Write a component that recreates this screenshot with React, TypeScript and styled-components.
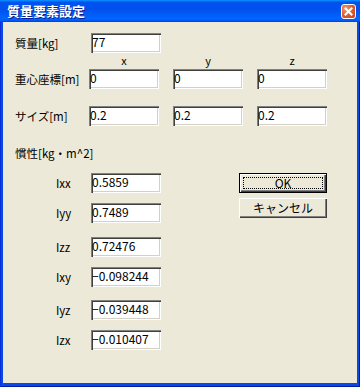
import styled, { createGlobalStyle } from "styled-components";

const GlobalStyle = createGlobalStyle`
  html, body {
    margin: 0;
    padding: 0;
  }
  body {
    width: 360px;
    height: 387px;
    overflow: hidden;
    font-family: "Noto Sans CJK JP", "Liberation Sans", sans-serif;
    font-size: 12px;
    color: #000;
  }
`;

const Window = styled.div`
  width: 360px;
  height: 387px;
  display: flex;
  flex-direction: column;
`;

const TitleBar = styled.div`
  height: 22px;
  flex: none;
  display: flex;
  align-items: center;
  justify-content: space-between;
  padding: 0 4px 0 7px;
  background: linear-gradient(
    to bottom,
    #0997ff 0%,
    #0053ee 10%,
    #0050ee 40%,
    #0066ff 85%,
    #005bff 92%,
    #003dd7 100%
  );
`;

const Title = styled.span`
  color: #fff;
  font-weight: bold;
  font-size: 13px;
  line-height: 16px;
  text-shadow: 1px 1px #0a1c8a;
`;

const CloseButton = styled.div`
  width: 15px;
  height: 15px;
  box-sizing: border-box;
  border: 1px solid #fff;
  border-radius: 3px;
  display: flex;
  align-items: center;
  justify-content: center;
  background: radial-gradient(
    circle at 30% 30%,
    #f29b78 0%,
    #e2602f 45%,
    #c8421a 100%
  );
`;

const Frame = styled.div`
  flex: 1;
  display: flex;
  padding: 0 3px 4px;
  background: #0c48e6;
  box-shadow: inset 1px 0 #0831d9, inset -1px 0 #001ca0, inset 0 -1px #001ca0;
`;

const Client = styled.div`
  flex: 1;
  background: #ece9d8;
  padding: 11px 0 0 12px;
  display: flex;
  flex-direction: column;
`;

const FieldRow = styled.div<{ $top?: number }>`
  display: grid;
  grid-template-columns: 60px repeat(3, 70px);
  column-gap: 14px;
  align-items: center;
  height: 20px;
  margin-top: ${(p) => p.$top ?? 0}px;
`;

const Label = styled.span`
  font-size: 11.5px;
  line-height: 14px;
  white-space: nowrap;
`;

const AxisRow = styled.div`
  display: grid;
  grid-template-columns: 60px repeat(3, 70px);
  column-gap: 14px;
  height: 16px;
  font-size: 11px;
  line-height: 14px;
`;

const Axis = styled.span`
  text-align: center;
`;

const TextBox = styled.input<{ $shift?: number }>`
  width: 70px;
  height: 20px;
  box-sizing: border-box;
  margin: 0 0 0 ${(p) => p.$shift ?? 0}px;
  padding: 0 1px 3px 1px;
  font-family: "Noto Sans CJK JP", "Liberation Sans", sans-serif;
  font-size: 12px;
  color: #000;
  background: #fff;
  border: none;
  outline: none;
  border-radius: 0;
  box-shadow: inset 1px 1px #808080, inset 2px 2px #404040,
    inset -1px -1px #fff, inset -2px -2px #d4d0c8;
`;

const SectionLabel = styled.div`
  margin-top: 20px;
  font-size: 11.5px;
  line-height: 14px;
`;

const Inertia = styled.div`
  display: flex;
  margin-top: 13px;
`;

const InertiaList = styled.div`
  display: flex;
  flex-direction: column;
  padding-left: 41px;
`;

const InertiaRow = styled.div<{ $top: number }>`
  display: grid;
  grid-template-columns: 35px 70px;
  align-items: center;
  height: 20px;
  margin-top: ${(p) => p.$top}px;
`;

const Buttons = styled.div`
  display: flex;
  flex-direction: column;
  gap: 5px;
  margin-left: 78px;
`;

const Button = styled.button<{ $default?: boolean }>`
  position: relative;
  width: 88px;
  height: 20px;
  padding: 0;
  font-family: "Noto Sans CJK JP", "Liberation Sans", sans-serif;
  font-size: 12px;
  line-height: 14px;
  color: #000;
  background: #ece9d8;
  border: ${(p) => (p.$default ? "1px solid #000" : "none")};
  border-radius: 0;
  box-shadow: inset 1px 1px #fff, inset -1px -1px #404040,
    inset -2px -2px #808080;
  &::after {
    content: "";
    display: ${(p) => (p.$default ? "block" : "none")};
    position: absolute;
    inset: 3px;
    border: 1px dotted #000;
  }
`;

const inertia = [
  { name: "Ixx", value: "0.5859", top: 0 },
  { name: "Iyy", value: "0.7489", top: 10 },
  { name: "Izz", value: "0.72476", top: 14 },
  { name: "Ixy", value: "−0.098244", top: 10 },
  { name: "Iyz", value: "−0.039448", top: 13 },
  { name: "Izx", value: "−0.010407", top: 10 },
];

const App = () => {
  return (
    <Window>
      <GlobalStyle />
      <TitleBar>
        <Title>質量要素設定</Title>
        <CloseButton>
          <svg width="9" height="9" viewBox="0 0 9 9">
            <path
              d="M1.5 1.5 L7.5 7.5 M7.5 1.5 L1.5 7.5"
              stroke="#fff"
              strokeWidth="2"
              strokeLinecap="square"
            />
          </svg>
        </CloseButton>
      </TitleBar>
      <Frame>
        <Client>
          <FieldRow>
            <Label>質量[kg]</Label>
            <TextBox defaultValue="77" $shift={2} />
          </FieldRow>
          <AxisRow>
            <span />
            <Axis>x</Axis>
            <Axis>y</Axis>
            <Axis>z</Axis>
          </AxisRow>
          <FieldRow>
            <Label>重心座標[m]</Label>
            <TextBox defaultValue="0" />
            <TextBox defaultValue="0" />
            <TextBox defaultValue="0" />
          </FieldRow>
          <FieldRow $top={17}>
            <Label>サイズ[m]</Label>
            <TextBox defaultValue="0.2" />
            <TextBox defaultValue="0.2" />
            <TextBox defaultValue="0.2" />
          </FieldRow>
          <SectionLabel>慣性[kg・m^2]</SectionLabel>
          <Inertia>
            <InertiaList>
              {inertia.map((item) => (
                <InertiaRow key={item.name} $top={item.top}>
                  <Label>{item.name}</Label>
                  <TextBox defaultValue={item.value} />
                </InertiaRow>
              ))}
            </InertiaList>
            <Buttons>
              <Button $default>OK</Button>
              <Button>キャンセル</Button>
            </Buttons>
          </Inertia>
        </Client>
      </Frame>
    </Window>
  );
};

export default App;
